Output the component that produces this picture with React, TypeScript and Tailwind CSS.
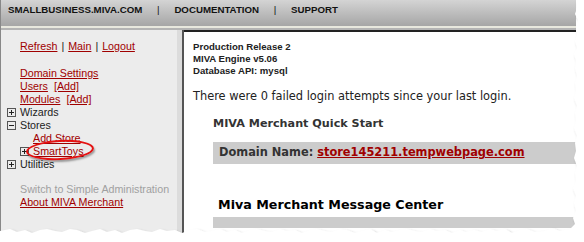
import React from "react";

const sans = { fontFamily: '"Liberation Sans", Arial, sans-serif' };
const verdana = { fontFamily: '"DejaVu Sans", Verdana, sans-serif' };

function Box({ open }: { open?: boolean }) {
  return (
    <span className="inline-flex w-[9px] h-[9px] border border-[#555] items-center justify-center mr-[4px] shrink-0">
      <svg width="7" height="7" viewBox="0 0 7 7">
        <path d="M1 3.5h5" stroke="#222" strokeWidth="1" />
        {!open && <path d="M3.5 1v5" stroke="#222" strokeWidth="1" />}
      </svg>
    </span>
  );
}

function Link({ children }: { children: React.ReactNode }) {
  return <span className="text-[#a00000] underline underline-offset-[1px]">{children}</span>;
}

export default function App() {
  return (
    <div className="relative w-[584px] h-[242px] bg-white overflow-hidden" style={sans}>
      <div className="w-[576px] h-[234px] flex flex-col border-l border-[#888]">
        {/* top nav */}
        <div className="h-[26px] bg-gradient-to-b from-[#d4d4d4] to-[#a6a6a6] flex items-start pt-[4px] pl-[7px] text-[9.7px] leading-[12px] font-bold text-[#111]">
          <span>SMALLBUSINESS.MIVA.COM</span>
          <span className="w-[32px] text-center font-normal">|</span>
          <span>DOCUMENTATION</span>
          <span className="w-[32px] text-center font-normal">|</span>
          <span>SUPPORT</span>
        </div>
        <div className="h-[2px] bg-[#e8e8de]" />
        <div className="h-[2px] bg-[#b4b4b4]" />

        <div className="flex flex-1 min-h-0">
          {/* left nav */}
          <div className="w-[176px] bg-[#ececec] pt-[10px] pl-[6px] text-[10.7px] leading-[13px] text-[#222] whitespace-nowrap">
            <div className="pl-[13px]">
              <Link>Refresh</Link>
              <span className="px-[4px]">|</span>
              <Link>Main</Link>
              <span className="px-[4px]">|</span>
              <Link>Logout</Link>
            </div>
            <div className="pl-[13px] mt-[14px]">
              <Link>Domain Settings</Link>
            </div>
            <div className="pl-[13px]">
              <Link>Users</Link>
              <span className="ml-[6px]">
                <Link>[Add]</Link>
              </span>
            </div>
            <div className="pl-[13px]">
              <Link>Modules</Link>
              <span className="ml-[6px]">
                <Link>[Add]</Link>
              </span>
            </div>
            <div className="flex items-center h-[13px]">
              <Box />
              Wizards
            </div>
            <div className="flex items-center h-[13px]">
              <Box open />
              Stores
            </div>
            <div className="pl-[26px]">
              <Link>Add Store</Link>
            </div>
            <div className="flex items-center h-[13px] pl-[13px] relative">
              <Box />
              <Link>SmartToys</Link>
              <span className="absolute left-[19px] top-[-5px] w-[68px] h-[20px] rounded-[50%] border-2 border-[#e41212] -rotate-3 shadow-[1px_2px_2px_rgba(0,0,0,0.35)]" />
            </div>
            <div className="flex items-center h-[13px]">
              <Box />
              Utilities
            </div>
            <div className="pl-[13px] mt-[12px] text-[#a0a0a0]">Switch to Simple Administration</div>
            <div className="pl-[13px]">
              <Link>About MIVA Merchant</Link>
            </div>
          </div>
          <div className="w-[5px] bg-[#dcdcdc]" />
          <div className="w-[2px] bg-[#555]" />

          {/* content */}
          <div className="flex-1 bg-white border-t-2 border-[#222] pt-[9px] pl-[9px] text-[#222]">
            <div className="text-[9.6px] leading-[12px] font-bold">
              <div>Production Release 2</div>
              <div>MIVA Engine v5.06</div>
              <div>Database API: mysql</div>
            </div>
            <div className="mt-[13px] text-[11.4px] leading-[13px]" style={verdana}>
              There were 0 failed login attempts since your last login.
            </div>
            <div style={verdana}>
              <div className="pl-[20px] mt-[14px] text-[11.2px] leading-[14px] font-bold text-[#333]">
                MIVA Merchant Quick Start
              </div>
              <div className="ml-[20px] mt-[11px] h-[22px] bg-[#cccccc] flex items-center pl-[6px] text-[11.4px] font-bold text-[#333] whitespace-nowrap">
                Domain Name:&nbsp;<Link>store145211.tempwebpage.com</Link>
              </div>
              <div className="pl-[25px] mt-[33px] text-[12.7px] leading-[15px] font-bold text-black">
                Miva Merchant Message Center
              </div>
              <div className="ml-[20px] mt-[5px] h-[11px] bg-[#cccccc]" />
            </div>
          </div>
        </div>
      </div>

      {/* torn edge */}
      <svg className="absolute left-0 top-0" width="584" height="242" viewBox="0 0 584 242">
        <defs>
          <filter id="sh" x="-5%" y="-5%" width="110%" height="110%">
            <feDropShadow dx="2" dy="2" stdDeviation="1.6" floodColor="#000" floodOpacity="0.4" />
          </filter>
        </defs>
        <path
          d="M584 0 L576 0 L577 8 L575 14 L578 20 L576 27 L577 35 L575 41 L577 48 L574 54 L576 61 L575 68 L577 76 L575 83 L576 91 L574 98 L577 106 L575 113 L576 121 L574 128 L577 136 L575 143 L576 151 L574 158 L577 166 L575 173 L576 181 L573 188 L576 196 L574 203 L576 211 L573 218 L575 224 L570 229 L560 231 L552 228 L545 231 L535 232 L527 229 L520 230 L512 233 L505 229 L497 231 L490 229 L482 232 L474 230 L466 232 L460 230 L452 233 L445 230 L437 231 L430 229 L422 232 L415 231 L407 229 L400 230 L392 232 L385 230 L377 233 L370 229 L362 231 L355 233 L347 230 L340 229 L332 232 L325 231 L317 229 L310 230 L302 233 L295 230 L287 231 L280 229 L272 232 L265 231 L257 229 L250 230 L242 233 L235 230 L227 232 L220 229 L212 231 L205 232 L197 229 L190 230 L182 233 L175 230 L167 231 L160 229 L152 232 L145 231 L137 229 L130 230 L122 233 L115 230 L107 232 L100 229 L92 231 L85 233 L77 230 L70 229 L62 232 L55 231 L47 229 L40 230 L32 233 L25 230 L17 232 L10 229 L0 231 L0 242 L584 242 Z"
          fill="#fff"
          filter="url(#sh)"
        />
      </svg>
    </div>
  );
}
